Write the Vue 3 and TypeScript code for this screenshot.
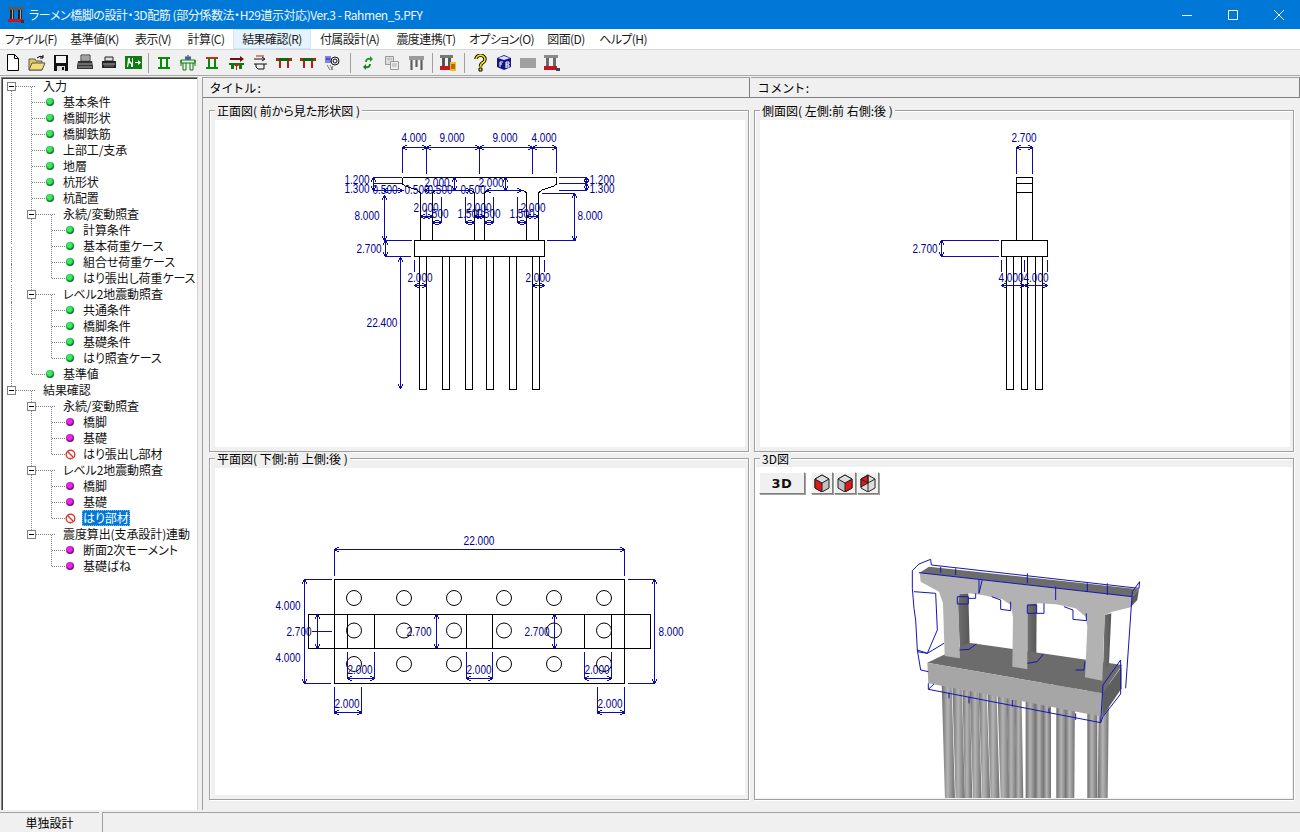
<template>
  <div class="app">
    <header class="titlebar">
      <svg class="app-icon" width="18" height="18" viewBox="0 0 18 18">
        <path fill="#5a5a5a" d="M1 1h16v3H1z" />
        <path fill="#222" d="M3 4h4v9H3zM11 4h4v9h-4z" />
        <path fill="#aaa" d="M5 4h1v9H5zM13 4h1v9h-1z" />
        <path fill="#c8141c" d="M1 13h15v3H1z" />
        <path fill="#5a2020" d="M14 14h3v3h-3z" />
      </svg>
      <span class="title-text">ラーメン橋脚の設計・3D配筋 (部分係数法・H29道示対応)Ver.3 - Rahmen_5.PFY</span>
      <div class="win-buttons">
        <span class="win-btn"><svg width="10" height="10" viewBox="0 0 10 10"><path d="M0 5.500h10" stroke="#fff" /></svg></span>
        <span class="win-btn"><svg width="10" height="10" viewBox="0 0 10 10"><path d="M.5.500h9v9h-9z" stroke="#fff" fill="none" /></svg></span>
        <span class="win-btn"><svg width="10" height="10" viewBox="0 0 10 10"><path d="M0 0l10 10M10 0L0 10" stroke="#fff" /></svg></span>
      </div>
    </header>

    <nav class="menubar">
      <span v-for="m in menus" :key="m" class="menu-item" :class="{ hot: m === '結果確認(R)' }">{{ m }}</span>
    </nav>

    <div class="toolbar">
      <span class="tb"><svg width="16" height="18" viewBox="0 0 16 18"><path d="M2.500.500h7l4 4v12h-11zM9.500.500v4h4" fill="#fff" stroke="#000" /></svg></span>
      <span class="tb"><svg width="18" height="18" viewBox="0 0 18 18"><path d="M1 5h6l1 2h6v9H1z" fill="#e8c850" stroke="#555" /><path d="M1 16l3-7h13l-3 7z" fill="#f0dc78" stroke="#555" /><path d="M9 4q3-3 6-1M15 1v3h-3" fill="none" stroke="#000" /></svg></span>
      <span class="tb"><svg width="16" height="18" viewBox="0 0 16 18"><path d="M1 1h14v16H1z" fill="#111" /><path d="M3 2h10v7H3z" fill="#f4f4f4" /><path d="M4 12h8v5H4z" fill="#ddd" /><path d="M9 13h2v3H9z" fill="#111" /></svg></span>
      <span class="tb"><svg width="18" height="18" viewBox="0 0 18 18"><path d="M5 1h9v6H5z" fill="#ddd" stroke="#333" /><path d="M6 3h7M6 5h7" stroke="#666" /><path d="M2 7h14l1 5v3H1v-3z" fill="#333" /><path d="M2 10h14M2 13h14" stroke="#aaa" /></svg></span>
      <span class="tb"><svg width="16" height="14" viewBox="0 0 16 14"><path d="M4 1h8v4H4z" fill="#ddd" stroke="#222" /><path d="M1 5h14v7H1z" fill="#222" /><path d="M2 8h12" stroke="#bbb" /><path d="M3 10h10" stroke="#777" /></svg></span>
      <span class="tb"><svg width="17" height="13" viewBox="0 0 17 13"><path d="M0 0h17v13H0z" fill="#127a12" /><path d="M3 2h2v3l2 2v4H6V8L4 7l-1 4H2zM7 2h1v9H7z" fill="#e6ffe6" /><path d="M10 6h3V4l3 2.500-3 2.500V7h-3z" fill="#fff" /></svg></span>
      <span class="sep first"></span>
      <span class="tb"><svg width="12" height="12" viewBox="0 0 12 12"><path d="M0 0h12v2H0zM0 10h12v2H0zM2 2h2v8H2zM8 2h2v8H8z" fill="#0a8a0a" /></svg></span>
      <span class="tb"><svg width="16" height="16" viewBox="0 0 16 16"><path d="M1 5h14v3H1zM3 8v7h3V8M10 8v7h3V8M1 5v6M15 5v6M6 5V1M10 5V1" fill="none" stroke="#0a7a0a" /><path d="M8 0v5M5 3h6" stroke="#1010c0" /></svg></span>
      <span class="tb"><svg width="12" height="12" viewBox="0 0 12 12"><path d="M0 0h12v2H0z" fill="#c03020" /><path d="M0 10h12v2H0zM2 2h2v8H2zM8 2h2v8H8z" fill="#0a8a0a" /></svg></span>
      <span class="tb"><svg width="17" height="16" viewBox="0 0 17 16"><path d="M1 8h15v2H1zM3 10h3v4H3zM11 10h3v4h-3z" fill="#0a7a0a" /><path d="M2 3h10V1l4 3-4 3V5H2z" fill="#701010" /><path d="M8 15V11H6l2.500-3 2.500 3H9v4z" fill="#d01818" /></svg></span>
      <span class="tb"><svg width="15" height="16" viewBox="0 0 15 16"><path d="M1 4h10M9 2l3 2-3 2M1 9h13M3 9v3M11 9v5" fill="none" stroke="#111" /><path d="M3 1h8" stroke="#c01818" /><path d="M3 12l2 2h6" fill="none" stroke="#111" /></svg></span>
      <span class="tb"><svg width="16" height="10" viewBox="0 0 16 10"><path d="M0 0h16v3H0z" fill="#0a6a0a" /><path d="M0 0h3v2H0zM13 0h3v2h-3z" fill="#d01818" /><path d="M3 3h2v7H3zM11 3h2v7h-2z" fill="#c01818" /></svg></span>
      <span class="tb"><svg width="16" height="10" viewBox="0 0 16 10"><path d="M0 0h16v3H0z" fill="#0a6a0a" /><path d="M0 0h3v2H0zM13 0h3v2h-3z" fill="#d01818" /><path d="M3 3h2v7H3zM11 3h2v7h-2z" fill="#c01818" /></svg></span>
      <span class="tb"><svg width="15" height="16" viewBox="0 0 15 16"><path d="M1 1v7M3 1v7M1 4h4M5 1v7" stroke="#1414d0" fill="none" /><circle cx="10" cy="6" r="4" fill="none" stroke="#111" /><circle cx="10" cy="6" r="2" fill="none" stroke="#111" /><path d="M2 10l3 5M5 10l3 5M8 11l-2 4" stroke="#777" fill="none" /></svg></span>
      <span class="sep wide"></span>
      <span class="tb"><svg width="12" height="14" viewBox="0 0 12 14"><path d="M3 6a4 4 0 0 1 5-4V0l3 3-3 3V4A2 2 0 0 0 5 6z" fill="#1a9a2a" /><path d="M9 8a4 4 0 0 1-5 4v2l-3-3 3-3v2a2 2 0 0 0 3-2z" fill="#128022" /></svg></span>
      <span class="tb"><svg width="14" height="14" viewBox="0 0 14 14"><path d="M.5.500h8v8h-8z" fill="#ddd" stroke="#999" /><path d="M5.500 5.500h8v8h-8z" fill="#eee" stroke="#999" /><path d="M2 3h5M7 8h5M7 10h5" stroke="#aaa" /></svg></span>
      <span class="tb"><svg width="15" height="14" viewBox="0 0 15 14"><path d="M0 0h15v4H0zM1 4h3v10H1zM6 4h3v7H6zM11 4h3v10h-3z" fill="#9a9a9a" /><path d="M2 4h1v10H2zM7 4h1v7H7zM12 4h1v10h-1z" fill="#5f5f5f" /></svg></span>
      <span class="sep"></span>
      <span class="tb"><svg width="18" height="18" viewBox="0 0 18 18"><path d="M1 1h13v3H1z" fill="#777" /><path d="M3 4h3v8H3zM9 4h3v8H9z" fill="#555" /><path d="M1 12h11v4H1z" fill="#c8141c" /><path d="M11 8h6v9h-6z" fill="#f0c020" /><path d="M13 10v5M15 10v5" stroke="#7a1010" /></svg></span>
      <span class="sep"></span>
      <span class="tb"><svg width="13" height="18" viewBox="0 0 13 18"><path d="M2 5a4.500 4 0 1 1 7 3.500c-2 1-2.500 2-2.500 4" fill="none" stroke="#000" stroke-width="3.400" /><path d="M2 5a4.500 4 0 1 1 7 3.500c-2 1-2.500 2-2.500 4" fill="none" stroke="#f4e400" stroke-width="1.600" /><path d="M5 14h3v3H5z" fill="#f4e400" stroke="#000" /></svg></span>
      <span class="tb"><svg width="16" height="15" viewBox="0 0 16 15"><path d="M1 3l7-3 7 3v9l-7 3-7-3z" fill="#14148c" /><path d="M2 3l6-2 6 2-6 2z" fill="#dfe4ff" /><path d="M4 7v5M4 7h3M4 9h2M10 7v6M10 7h3v2h-3M10 10h3v2h-3" stroke="#fff" fill="none" /></svg></span>
      <span class="tb"><svg width="16" height="10" viewBox="0 0 16 10"><path d="M0 0h16v10H0z" fill="#a0a0a0" /></svg></span>
      <span class="tb"><svg width="17" height="18" viewBox="0 0 17 18"><path d="M0 1h14v3H0z" fill="#8a8a8a" /><path d="M2 4h3v8H2zM9 4h3v8H9z" fill="#6a6a6a" /><path d="M0 12h13v4H0z" fill="#c01820" /><path d="M12 14h4v3h-4z" fill="#443a6a" /></svg></span>
    </div>

    <main class="body">
      <aside class="tree">
        <svg class="tree-lines" width="130" height="520">
          <path :d="treeLines" fill="none" stroke="#808080" stroke-dasharray="1 1" shape-rendering="crispEdges" />
        </svg>
        <div v-for="(n, i) in nodes" :key="i" class="node" :class="`lv${n.lv}`">
          <span v-if="n.box" class="box"><i></i></span>
          <span v-if="n.st === 'ok'" class="dot green"></span>
          <span v-else-if="n.st === 'res'" class="dot purple"></span>
          <svg v-else-if="n.st === 'no'" class="no" width="11" height="11" viewBox="0 0 11 11">
            <circle cx="5.500" cy="5.500" r="4.300" fill="#fff" stroke="#d83a30" stroke-width="1.400" />
            <path d="M2.500 2.500l6 6" stroke="#d83a30" stroke-width="1.400" />
          </svg>
          <span class="label" :class="{ selected: n.sel }">{{ n.t }}</span>
        </div>
      </aside>

      <section class="content">
        <div class="headers">
          <div class="head-cell">タイトル:</div>
          <div class="head-cell">コメント:</div>
        </div>
        <div class="views">
          <div class="group">
            <span class="legend">正面図( 前から見た形状図 )</span>
            <div class="canvas">
              <svg class="draw" viewBox="216 120 530 327">
                <path :d="front.black" class="ink" />
                <path :d="front.blue" class="dim" />
                <text v-for="(l, i) in front.labels" :key="i" :x="l.x" :y="l.y + 4.500" :textLength="labelLen(l.t)" lengthAdjust="spacingAndGlyphs" class="num">{{ l.t }}</text>
              </svg>
            </div>
          </div>
          <div class="group">
            <span class="legend">側面図( 左側:前 右側:後 )</span>
            <div class="canvas">
              <svg class="draw" viewBox="761 120 530 327">
                <path :d="side.black" class="ink" />
                <path :d="side.blue" class="dim" />
                <text v-for="(l, i) in side.labels" :key="i" :x="l.x" :y="l.y + 4.500" :textLength="labelLen(l.t)" lengthAdjust="spacingAndGlyphs" class="num">{{ l.t }}</text>
              </svg>
            </div>
          </div>
          <div class="group">
            <span class="legend">平面図( 下側:前 上側:後 )</span>
            <div class="canvas">
              <svg class="draw" viewBox="216 468 530 327">
                <path :d="plan.black" class="ink" />
                <circle v-for="(c, i) in planPiles" :key="i" :cx="c.x" :cy="c.y" r="7.500" fill="none" stroke="#000" />
                <path :d="plan.blue" class="dim" />
                <text v-for="(l, i) in plan.labels" :key="i" :x="l.x" :y="l.y + 4.500" :textLength="labelLen(l.t)" lengthAdjust="spacingAndGlyphs" class="num">{{ l.t }}</text>
              </svg>
            </div>
          </div>
          <div class="group g3d">
            <span class="legend">3D図</span>
            <div class="canvas3d">
              <div class="bar3d">
                <button class="btn3d">3D</button>
                <button class="cube"><svg width="18" height="18" viewBox="0 0 18 18"><path d="M2 5l7-4 7 4v9l-7 4-7-4z" fill="#c0c0c0" stroke="#222" /><path d="M2 5l7 4v9l-7-4z" fill="#e01818" stroke="#222" /><path d="M2 5l7-4 7 4-7 4z" fill="#ddd" stroke="#222" /></svg></button>
                <button class="cube"><svg width="18" height="18" viewBox="0 0 18 18"><path d="M2 5l7-4 7 4v9l-7 4-7-4z" fill="#c0c0c0" stroke="#222" /><path d="M16 5L9 9v9l7-4z" fill="#e01818" stroke="#222" /><path d="M2 5l7-4 7 4-7 4z" fill="#ddd" stroke="#222" /></svg></button>
                <button class="cube"><svg width="18" height="18" viewBox="0 0 18 18"><path d="M2 5l7-4 7 4v9l-7 4-7-4z" fill="#ddd" stroke="#222" /><path d="M2 5l7-4v8l-7 4z" fill="#e01818" stroke="#222" /><path d="M9 1v17M2 5l7 4 7-4" fill="none" stroke="#222" /></svg></button>
              </div>
              <svg class="model" viewBox="756 494 537 304">
                <defs>
                  <linearGradient id="pile">
                    <stop offset="0" stop-color="#6e6e6e" />
                    <stop offset=".45" stop-color="#b4b4b4" />
                    <stop offset="1" stop-color="#707070" />
                  </linearGradient>
                  <linearGradient id="side" x1="0" y1="0" x2="1" y2="0">
                    <stop offset="0" stop-color="#707070" />
                    <stop offset="1" stop-color="#585858" />
                  </linearGradient>
                </defs>
                <g transform="translate(900 550) scale(.3333)">
                  <polygon v-for="(p, i) in piles3d" :key="i" :points="p" fill="url(#pile)" />
                  <polygon points="175,132 208,130 212,285 183,305" fill="url(#side)" />
                  <polygon points="385,160 413,160 412,325 385,345" fill="url(#side)" />
                  <polygon points="85,338 210,278 670,345 610,430" fill="#6c6c6c" />
                  <polygon points="85,338 610,430 610,500 88,400" fill="#a6a6a6" />
                  <polygon points="610,430 668,350 668,415 610,500" fill="#5e5e5e" />
                  <polygon points="617,195 637,190 630,345 612,365" fill="url(#side)" />
                  <polygon points="62,68 65,95 120,125 132,160 137,318 183,325 178,160 182,132 210,130 250,135 310,148 335,165 342,200 340,350 385,358 385,165 420,160 470,163 530,175 560,200 565,230 558,382 610,392 617,195 640,185 695,172 700,140" fill="#b2b2b2" />
                  <polygon points="62,68 90,50 720,118 700,140" fill="#6c6c6c" />
                  <polygon points="700,140 720,118 715,150 695,172" fill="#5c5c5c" />
                  <path :d="blue3d" fill="none" stroke="#1414b4" stroke-width="3" />
                </g>
              </svg>
            </div>
          </div>
        </div>
      </section>
    </main>

    <footer class="statusbar">
      <div class="status-cell first">単独設計</div>
      <div class="status-cell rest"></div>
    </footer>
  </div>
</template>

<script setup lang="ts">
interface TreeNode {
  t: string
  lv: number
  box?: boolean
  st?: 'ok' | 'res' | 'no'
  sel?: boolean
}

interface Label {
  x: number
  y: number
  t: string
}

const menus = [
  'ファイル(F)', '基準値(K)', '表示(V)', '計算(C)', '結果確認(R)',
  '付属設計(A)', '震度連携(T)', 'オプション(O)', '図面(D)', 'ヘルプ(H)'
]

const nodes: TreeNode[] = [
  { t: '入力', lv: 0, box: true },
  { t: '基本条件', lv: 1, st: 'ok' },
  { t: '橋脚形状', lv: 1, st: 'ok' },
  { t: '橋脚鉄筋', lv: 1, st: 'ok' },
  { t: '上部工/支承', lv: 1, st: 'ok' },
  { t: '地層', lv: 1, st: 'ok' },
  { t: '杭形状', lv: 1, st: 'ok' },
  { t: '杭配置', lv: 1, st: 'ok' },
  { t: '永続/変動照査', lv: 1, box: true },
  { t: '計算条件', lv: 2, st: 'ok' },
  { t: '基本荷重ケース', lv: 2, st: 'ok' },
  { t: '組合せ荷重ケース', lv: 2, st: 'ok' },
  { t: 'はり張出し荷重ケース', lv: 2, st: 'ok' },
  { t: 'レベル2地震動照査', lv: 1, box: true },
  { t: '共通条件', lv: 2, st: 'ok' },
  { t: '橋脚条件', lv: 2, st: 'ok' },
  { t: '基礎条件', lv: 2, st: 'ok' },
  { t: 'はり照査ケース', lv: 2, st: 'ok' },
  { t: '基準値', lv: 1, st: 'ok' },
  { t: '結果確認', lv: 0, box: true },
  { t: '永続/変動照査', lv: 1, box: true },
  { t: '橋脚', lv: 2, st: 'res' },
  { t: '基礎', lv: 2, st: 'res' },
  { t: 'はり張出し部材', lv: 2, st: 'no' },
  { t: 'レベル2地震動照査', lv: 1, box: true },
  { t: '橋脚', lv: 2, st: 'res' },
  { t: '基礎', lv: 2, st: 'res' },
  { t: 'はり部材', lv: 2, st: 'no', sel: true },
  { t: '震度算出(支承設計)連動', lv: 1, box: true },
  { t: '断面2次モーメント', lv: 2, st: 'res' },
  { t: '基礎ばね', lv: 2, st: 'res' }
]

// tree connector lines, coordinates relative to the tree box
const rowY = (i: number) => i * 16 + 8.5
const treeLines = (() => {
  let d = `M9.500 ${rowY(0)}V${rowY(19)}M29.500 ${rowY(0)}V${rowY(18)}M29.500 ${rowY(19)}V${rowY(28)}`
  const spans = [[8, 12], [13, 17], [20, 23], [24, 27], [28, 30]]
  spans.forEach(([a, b]) => { d += `M49.500 ${rowY(a)}V${rowY(b)}` })
  nodes.forEach((n, i) => {
    const x1 = n.lv * 20 + 9.500
    d += `M${x1} ${rowY(i)}h${n.box ? 24 : 14}`
  })
  return d
})()

const hDim = (x1: number, x2: number, y: number) =>
  `M${x1} ${y}H${x2}M${x1 + 4} ${y - 2.500}L${x1} ${y}L${x1 + 4} ${y + 2.500}M${x2 - 4} ${y - 2.500}L${x2} ${y}L${x2 - 4} ${y + 2.500}`
const vDim = (x: number, y1: number, y2: number) =>
  `M${x} ${y1}V${y2}M${x - 2.500} ${y1 + 4}L${x} ${y1}L${x + 2.500} ${y1 + 4}M${x - 2.500} ${y2 - 4}L${x} ${y2}L${x + 2.500} ${y2 - 4}`
const vTick = (x: number, y1: number, y2: number) => `M${x} ${y1}V${y2}`
const hTick = (x1: number, x2: number, y: number) => `M${x1} ${y}H${x2}`
const rect = (x1: number, y1: number, x2: number, y2: number) => `M${x1} ${y1}H${x2}V${y2}H${x1}Z`

const labelLen = (t: string) => (t.length > 5 ? 31 : 25)

const frontPiles = [420.5, 443.5, 466.5, 487.5, 510.5, 533.5]
const front = {
  black:
    'M403.500 177.500H557.500V184L555 186L543 190L539.500 193V240.500' +
    'M527.500 240.500V193L524 190H489L485.500 193V240.500M475.500 240.500V193L472 190H437L433.500 193V240.500' +
    'M421.500 240.500V193L418 190L406 186L403.500 184V177.500' +
    rect(415.5, 240.5, 545.5, 256.5) +
    frontPiles.map(x => rect(x, 256.5, x + 7, 389.5)).join(''),
  blue:
    hDim(403.5, 427.5, 147.5) + hDim(427.5, 480.5, 147.5) + hDim(480.5, 533.5, 147.5) + hDim(533.5, 557.5, 147.5) +
    vTick(403.5, 147, 173) + vTick(427.5, 147, 174) + vTick(480.5, 147, 174) + vTick(533.5, 147, 174) + vTick(557.5, 147, 173) +
    hTick(374, 403, 177.5) + hTick(374, 403, 183.5) + hTick(374, 405, 190.5) + vDim(374.5, 177.5, 190.5) +
    hTick(560, 587, 177.5) + hTick(560, 587, 183.5) + hTick(560, 587, 190.5) + vDim(587.5, 177.5, 183.5) + vDim(587.5, 183.5, 190.5) +
    vDim(455.5, 177.5, 190.5) + vDim(506.5, 177.5, 190.5) + hDim(487.5, 522.5, 190.5) + hDim(384.5, 403.5, 190.5) + hDim(425.5, 471.5, 190.5) +
    vTick(442.5, 197, 222) + vTick(466.5, 197, 222) + vTick(494.5, 197, 222) + vTick(518.5, 197, 222) +
    hDim(421.5, 433.5, 216.5) + hDim(475.5, 485.5, 216.5) + hDim(527.5, 539.5, 216.5) +
    hDim(433.5, 442.5, 222.5) + hDim(466.5, 475.5, 222.5) + hDim(485.5, 494.5, 222.5) + hDim(518.5, 527.5, 222.5) +
    vDim(385.5, 195.5, 240.5) + hTick(385, 413, 240.5) +
    vDim(575.5, 193.5, 240.5) + hTick(543, 575, 193.5) + hTick(548, 577, 240.5) +
    vDim(386.5, 240.5, 256.5) + hTick(386, 412, 256.5) +
    vDim(401.5, 257.5, 388.5) +
    vTick(415.5, 260, 272) + vTick(545.5, 260, 272) + hDim(415.5, 427.5, 285.5) + hDim(533.5, 545.5, 285.5),
  labels: [
    { x: 415, y: 137, t: '4.000' }, { x: 453, y: 137, t: '9.000' }, { x: 506, y: 137, t: '9.000' }, { x: 545, y: 137, t: '4.000' },
    { x: 358, y: 179, t: '1.200' }, { x: 358, y: 188, t: '1.300' }, { x: 603, y: 179, t: '1.200' }, { x: 603, y: 188, t: '1.300' },
    { x: 386, y: 189, t: '0.500' }, { x: 418, y: 189, t: '0.500' }, { x: 441, y: 189, t: '0.500' }, { x: 474, y: 189, t: '0.500' },
    { x: 438, y: 182, t: '2.000' }, { x: 492, y: 182, t: '2.000' },
    { x: 427, y: 207, t: '2.000' }, { x: 480, y: 207, t: '2.000' }, { x: 534, y: 207, t: '2.000' },
    { x: 437, y: 213, t: '1.500' }, { x: 471, y: 213, t: '1.500' }, { x: 489, y: 213, t: '1.500' }, { x: 523, y: 213, t: '1.500' },
    { x: 368, y: 215, t: '8.000' }, { x: 591, y: 215, t: '8.000' }, { x: 370, y: 248, t: '2.700' },
    { x: 421, y: 277, t: '2.000' }, { x: 539, y: 277, t: '2.000' }, { x: 383, y: 322, t: '22.400' }
  ] as Label[]
}

const side = {
  black:
    rect(1017.5, 177.5, 1033.5, 240.5) + 'M1017.500 183.500H1033.500M1017.500 192.500H1033.500' +
    rect(1002.5, 240.5, 1048.5, 256.5) +
    rect(1007.5, 256.5, 1014.5, 389.5) + rect(1022.5, 256.5, 1028.5, 389.5) + rect(1036.5, 256.5, 1043.5, 389.5),
  blue:
    hDim(1017.5, 1033.5, 147.5) + vTick(1017.5, 147, 174) + vTick(1033.5, 147, 174) +
    vDim(942.5, 240.5, 256.5) + hTick(942, 1000, 240.5) + hTick(942, 1000, 256.5) +
    vTick(1002.5, 260, 272) + vTick(1025.5, 260, 272) + vTick(1048.5, 260, 272) +
    hDim(1002.5, 1025.5, 285.5) + hDim(1025.5, 1048.5, 285.5),
  labels: [
    { x: 1025, y: 137, t: '2.700' }, { x: 926, y: 248, t: '2.700' },
    { x: 1012, y: 277, t: '4.000' }, { x: 1037, y: 277, t: '4.000' }
  ] as Label[]
}

const planPiles = [598, 630.5, 664].flatMap(y => [355, 405, 455, 505, 555, 605].map(x => ({ x, y })))

const plan = {
  black:
    rect(335.5, 579.5, 625.5, 683.5) + rect(309.5, 614.5, 651.5, 648.5) +
    [348.5, 375.5, 467.5, 493.5, 585.5, 612.5].map(x => `M${x} 614.500V648.500`).join(''),
  blue:
    hDim(335.5, 625.5, 549.5) + vTick(335.5, 549, 576) + vTick(625.5, 549, 576) +
    vDim(305.5, 579.5, 683.5) + hTick(305, 333, 579.5) + hTick(305, 332, 683.5) +
    vDim(655.5, 579.5, 683.5) + hTick(629, 656, 579.5) + hTick(629, 656, 683.5) +
    vDim(318.5, 614.5, 648.5) + hTick(313, 333, 631.5) +
    vDim(437.5, 614.5, 648.5) + vDim(555.5, 614.5, 648.5) +
    hDim(348.5, 375.5, 678.5) + hDim(467.5, 493.5, 678.5) + hDim(585.5, 612.5, 678.5) +
    [348.5, 375.5, 467.5, 493.5, 585.5, 612.5].map(x => vTick(x, 652, 678)).join('') +
    hDim(335.5, 362.5, 712.5) + hDim(598.5, 625.5, 712.5) +
    [335.5, 362.5, 598.5, 625.5].map(x => vTick(x, 687, 714)).join(''),
  labels: [
    { x: 480, y: 540, t: '22.000' }, { x: 289, y: 605, t: '4.000' }, { x: 289, y: 657, t: '4.000' }, { x: 672, y: 631, t: '8.000' },
    { x: 300, y: 631, t: '2.700' }, { x: 420, y: 631, t: '2.700' }, { x: 538, y: 631, t: '2.700' },
    { x: 361, y: 669, t: '2.000' }, { x: 480, y: 669, t: '2.000' }, { x: 598, y: 669, t: '2.000' },
    { x: 348, y: 703, t: '2.000' }, { x: 611, y: 703, t: '2.000' }
  ] as Label[]
}

// piles of the 3D model as [left x, right x, drift to the bottom], in a 3x working scale
const piles3d = [
  [128, 158, 10], [160, 188, 10], [190, 212, 8], [212, 238, 10], [238, 262, 12], [265, 292, 10],
  [295, 322, 10], [322, 346, 8], [346, 367, 6], [380, 410, 0], [408, 434, 0], [432, 456, 0],
  [472, 504, 0], [500, 528, -2], [565, 595, 0], [600, 630, -4]
].map(([a, b, s]) => `${a},400 ${b},400 ${b + s},750 ${a + s},750`)

const blue3d =
  'M60 42L95 28L97 45L720 115L722 95L700 125L680 415' +
  'M40 62L60 42M40 62V115L45 175L50 210L55 300L65 360L88 365M45 125L110 130L115 240L85 310L55 300' +
  'M60 68L700 140M125 50V68M170 55V75M240 90V130L250 88M385 70V100M470 110V150M565 100V125M625 100V135' +
  'M175 140H208V162H175ZM208 145H230V130M278 140L305 150V178L335 182V155M385 165H413V190H385ZM413 190H435V160' +
  'M495 170L522 180V208L562 212V190' +
  'M182 300L210 298L232 282M385 340L415 335L433 312M530 360L555 360L558 335' +
  'M88 400V418L605 518L612 500L665 432V330L612 405L605 518M88 418L105 402M55 305L85 310L135 280' +
  'M150 428V445M210 440V460M340 450V470M450 475V490M530 490V510'
</script>

<style>
html,
body {
  margin: 0;
  background: #f0f0f0;
}
</style>

<style scoped>
.app {
  width: 1300px;
  height: 832px;
  display: flex;
  flex-direction: column;
  overflow: hidden;
  background: #f0f0f0;
  color: #000;
  font-family: "Noto Sans CJK JP", "Liberation Sans", sans-serif;
  font-size: 12px;
  font-feature-settings: "palt";
}

/* window chrome */
.titlebar {
  height: 29px;
  flex: none;
  display: flex;
  align-items: center;
  background: #0078d7;
  color: #fff;
  padding-left: 7px;
}
.app-icon {
  margin-right: 4px;
}
.title-text {
  flex: 1;
  font-size: 12px;
  letter-spacing: -0.43px;
  opacity: 0.95;
}
.win-buttons {
  display: flex;
  height: 29px;
  margin-right: -2px;
}
.win-btn {
  width: 46px;
  display: flex;
  align-items: center;
  justify-content: center;
}
.menubar {
  height: 20px;
  flex: none;
  display: grid;
  grid-template-columns: 62px 65px 52px 54px 78px 77px 76px 75px 54px 60px;
  background: #fff;
  border-bottom: 1px solid #d9d9d9;
}
.menu-item {
  line-height: 19px;
  text-align: center;
  white-space: nowrap;
  letter-spacing: -0.6px;
  color: #1a1a1a;
}
.menu-item.hot {
  background: #e5f3ff;
  box-shadow: inset 0 0 0 1px #cce8ff;
}
.toolbar {
  height: 25px;
  flex: none;
  display: flex;
  align-items: center;
  padding-left: 1px;
  border-bottom: 1px solid #a8a8a8;
}
.tb {
  width: 24px;
  height: 24px;
  display: flex;
  align-items: center;
  justify-content: center;
}
.sep {
  width: 8px;
  height: 20px;
  flex: none;
  background: linear-gradient(#a0a0a0, #a0a0a0) center / 1px 100% no-repeat;
}
.sep.first {
  width: 7px;
}
.sep.wide {
  width: 12px;
}

.body {
  flex: 1;
  min-height: 0;
  display: flex;
  padding-top: 1px;
}

/* tree */
.tree {
  position: relative;
  width: 195px;
  flex: none;
  margin-left: 1px;
  background: #fff;
  border-top: 1px solid #808080;
  border-left: 1px solid #808080;
  border-right: 1px solid #d4d4d4;
  box-shadow: inset 1px 1px 0 #404040;
  overflow: hidden;
  font-size: 12px;
}
.tree-lines {
  position: absolute;
  left: 0;
  top: 0;
}
.node {
  position: relative;
  height: 16px;
  line-height: 16px;
  white-space: nowrap;
}
.box {
  position: absolute;
  top: 4px;
  width: 9px;
  height: 9px;
  box-sizing: border-box;
  background: #fff;
  border: 1px solid #808080;
}
.box i {
  position: absolute;
  left: 1px;
  top: 3px;
  width: 5px;
  height: 1px;
  background: #000;
}
.lv0 .box {
  left: 5px;
}
.lv1 .box {
  left: 25px;
}
.dot {
  position: absolute;
  top: 4px;
  width: 8px;
  height: 8px;
  border-radius: 50%;
}
.dot.green {
  background: radial-gradient(circle at 45% 40%, #3ce860 0 35%, #0c8a28 60%, #0a2a18 90%);
}
.dot.purple {
  background: radial-gradient(circle at 45% 40%, #e828e8 0 35%, #8e0e8e 60%, #200a28 90%);
}
.lv1 .dot {
  left: 44px;
}
.lv2 .dot {
  left: 64px;
}
.no {
  position: absolute;
  left: 63px;
  top: 3px;
}
.label {
  position: absolute;
  top: 0;
  padding: 0 1px;
  letter-spacing: -0.1px;
  color: #111;
}
.lv0 .label {
  left: 40px;
}
.lv1 .label {
  left: 60px;
}
.lv2 .label {
  left: 80px;
}
.label.selected {
  background: #0078d7;
  color: #fff;
  outline: 1px dotted #7fbcec;
  outline-offset: -1px;
}

/* right side */
.content {
  flex: 1;
  min-width: 0;
  display: flex;
  flex-direction: column;
  margin-left: 4px;
  border-left: 1px solid #a0a0a0;
}
.headers {
  display: grid;
  grid-template-columns: 547px 1fr;
  column-gap: 1px;
  height: 20px;
  flex: none;
  border-bottom: 1px solid #808080;
}
.head-cell {
  padding-left: 7px;
  line-height: 19px;
  border-top: 1px solid #a0a0a0;
  border-right: 1px solid #808080;
  letter-spacing: 1.5px;
}
.views {
  flex: 1;
  min-height: 0;
  display: grid;
  grid-template-columns: 540px 540px;
  grid-template-rows: 342px 342px;
  gap: 6px 5px;
  padding: 12px 0 0 6px;
}
.group {
  position: relative;
  box-sizing: border-box;
  border: 1px solid #a0a0a0;
  box-shadow: 1px 1px 0 #fff, inset 1px 1px 0 #fff;
  padding: 9px 3px 4px 5px;
}
.g3d {
  padding: 8px 1px 1px 0;
}
.legend {
  position: absolute;
  left: 5px;
  top: -7px;
  line-height: 13px;
  padding: 0 2px;
  background: #f0f0f0;
  white-space: nowrap;
  font-size: 12px;
}
.canvas {
  height: 100%;
  background: #fff;
}
.draw {
  display: block;
  width: 100%;
  height: 100%;
}
.ink {
  fill: none;
  stroke: #000;
  shape-rendering: crispEdges;
}
.dim {
  fill: none;
  stroke: #0c0ca8;
  shape-rendering: crispEdges;
}
.num {
  fill: #00008c;
  font-family: "Liberation Sans", sans-serif;
  font-size: 13.500px;
  text-anchor: middle;
}
.canvas3d {
  height: 100%;
  display: flex;
  flex-direction: column;
  background: #fff;
}
.bar3d {
  flex: none;
  display: flex;
  align-items: center;
  height: 22px;
  padding: 5px 0 0 4px;
}
.btn3d,
.cube {
  padding: 0;
  display: flex;
  align-items: center;
  justify-content: center;
  height: 22px;
  background: #f0f0f0;
  border: 1px solid;
  border-color: #fff #808080 #808080 #fff;
  box-shadow: 1px 1px 0 #a0a0a0;
}
.btn3d {
  width: 46px;
  margin-right: 6px;
  font-family: "DejaVu Sans", sans-serif;
  font-weight: bold;
  font-size: 13px;
  letter-spacing: 0.5px;
  color: #111;
}
.cube {
  width: 22px;
  margin-right: 1px;
}
.model {
  flex: 1;
  min-height: 0;
  width: 100%;
  display: block;
}

/* status bar */
.statusbar {
  height: 22px;
  flex: none;
  display: flex;
  gap: 3px;
  padding-top: 2px;
  box-sizing: border-box;
}
.status-cell {
  border-top: 1px solid #a0a0a0;
  line-height: 19px;
}
.status-cell.first {
  width: 99px;
  text-align: center;
}
.status-cell.rest {
  flex: 1;
  border-left: 1px solid #a0a0a0;
}
</style>
